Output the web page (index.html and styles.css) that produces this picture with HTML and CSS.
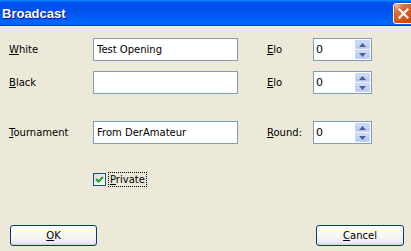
FILE: index.html
```html
<!DOCTYPE html>
<html lang="en">
<head>
    <meta charset="UTF-8">
    <title>Broadcast</title>
    <link rel="stylesheet" href="styles.css">
</head>
<body>
    <div class="window">
        <div class="titlebar">
            <span class="title">Broadcast</span>
            <button class="close" aria-label="Close">
                <svg width="11" height="11" viewBox="0 0 11 11">
                    <path d="M1.5 1.5 L9.5 9.5 M9.5 1.5 L1.5 9.5" stroke="#fff" stroke-width="2.2" stroke-linecap="square"/>
                </svg>
            </button>
        </div>

        <div class="content">
            <div class="row">
                <label class="label"><u>W</u>hite</label>
                <input class="field" type="text" value="Test Opening">
                <label class="label"><u>E</u>lo</label>
                <div class="spin">
                    <input class="spin-value" type="text" value="0">
                    <div class="arrows">
                        <span class="arrow"><svg width="7" height="4" viewBox="0 0 7 4"><path d="M0 4 L3.5 0 L7 4 Z" fill="#4d6185"/></svg></span>
                        <span class="arrow"><svg width="7" height="4" viewBox="0 0 7 4"><path d="M0 0 L3.5 4 L7 0 Z" fill="#4d6185"/></svg></span>
                    </div>
                </div>
            </div>

            <div class="row row-second">
                <label class="label"><u>B</u>lack</label>
                <input class="field" type="text" value="">
                <label class="label"><u>E</u>lo</label>
                <div class="spin">
                    <input class="spin-value" type="text" value="0">
                    <div class="arrows">
                        <span class="arrow"><svg width="7" height="4" viewBox="0 0 7 4"><path d="M0 4 L3.5 0 L7 4 Z" fill="#4d6185"/></svg></span>
                        <span class="arrow"><svg width="7" height="4" viewBox="0 0 7 4"><path d="M0 0 L3.5 4 L7 0 Z" fill="#4d6185"/></svg></span>
                    </div>
                </div>
            </div>

            <div class="row row-third">
                <label class="label"><u>T</u>ournament</label>
                <input class="field" type="text" value="From DerAmateur">
                <label class="label"><u>R</u>ound:</label>
                <div class="spin">
                    <input class="spin-value" type="text" value="0">
                    <div class="arrows">
                        <span class="arrow"><svg width="7" height="4" viewBox="0 0 7 4"><path d="M0 4 L3.5 0 L7 4 Z" fill="#4d6185"/></svg></span>
                        <span class="arrow"><svg width="7" height="4" viewBox="0 0 7 4"><path d="M0 0 L3.5 4 L7 0 Z" fill="#4d6185"/></svg></span>
                    </div>
                </div>
            </div>

            <div class="check-row">
                <span class="checkbox">
                    <svg width="9" height="9" viewBox="0 0 9 9">
                        <path d="M1 4 L3.5 6.5 L8 2" fill="none" stroke="#21a121" stroke-width="2"/>
                    </svg>
                </span>
                <span class="check-label"><u>P</u>rivate</span>
            </div>

            <div class="footer">
                <button class="button"><u>O</u>K</button>
                <button class="button"><u>C</u>ancel</button>
            </div>
        </div>
    </div>
</body>
</html>
```

FILE: styles.css
```css
body {
    margin: 0;
    width: 411px;
    height: 251px;
    overflow: hidden;
    background-color: #ece9d8;
    font-family: "DejaVu Sans", Verdana, sans-serif;
    font-size: 10px;
    color: #000;
}

.window {
    height: 251px;
}

.titlebar {
    height: 26px;
    display: flex;
    align-items: center;
    justify-content: space-between;
    overflow: hidden;
    background: linear-gradient(to bottom, #0997ff 0, #0053ee 8%, #0050ee 40%, #0066ff 88%, #0066ff 93%, #005bff 95%, #003dd7 96%, #003dd7 100%);
}

.title {
    padding-left: 2px;
    font-family: "Liberation Sans", Arial, sans-serif;
    font-size: 13px;
    font-weight: bold;
    color: #fff;
    text-shadow: 1px 1px 0 #0f1089;
}

.close {
    width: 21px;
    height: 21px;
    margin-right: -3px;
    padding: 0;
    display: flex;
    align-items: center;
    justify-content: center;
    border: 1px solid #fff;
    border-radius: 3px;
    background: radial-gradient(circle at 90% 90%, #cc4600 0%, #dc6527 55%, #cd7546 70%, #ffccb2 90%, #fff 100%);
    box-shadow: inset 0 -1px 2px 1px #da4600;
}

.content {
    padding: 12px 0 0 9px;
}

.row {
    display: grid;
    grid-template-columns: 84px 174px 46px 59px;
    align-items: center;
    height: 23px;
}

.row-second {
    margin-top: 10px;
}

.row-third {
    margin-top: 27px;
}

.label {
    white-space: nowrap;
}

.field {
    box-sizing: border-box;
    width: 145px;
    height: 23px;
    margin: 0;
    padding: 0 3px;
    border: 1px solid #7f9db9;
    background: #fff;
    font-family: inherit;
    font-size: 10px;
    color: #000;
    outline: none;
}

.spin {
    box-sizing: border-box;
    width: 59px;
    height: 23px;
    display: flex;
    border: 1px solid #7f9db9;
    background: #fff;
}

.spin-value {
    flex: 1;
    min-width: 0;
    margin: 0;
    padding: 0 2px;
    border: none;
    font-family: inherit;
    font-size: 11px;
    outline: none;
    background: transparent;
}

.arrows {
    width: 15px;
    margin: 1px 1px 1px 0;
    display: flex;
    flex-direction: column;
    gap: 1px;
    background: #f5f1e6;
}

.arrow {
    flex: 1;
    display: flex;
    align-items: center;
    justify-content: center;
    border-radius: 1px;
    background: linear-gradient(to bottom, #d0dcfb, #b7c8f5);
    border: 1px solid #c5d3f8;
}

.check-row {
    display: flex;
    align-items: center;
    gap: 2px;
    height: 15px;
    margin-top: 28px;
    padding-left: 84px;
}

.checkbox {
    box-sizing: border-box;
    width: 13px;
    height: 13px;
    display: flex;
    align-items: center;
    justify-content: center;
    border: 1px solid #1c5180;
    background: linear-gradient(135deg, #dcdcd7, #fff);
}

.check-label {
    padding: 0 1px;
    border: 1px dotted #000;
    line-height: 13px;
}

.footer {
    display: flex;
    justify-content: space-between;
    margin-top: 38px;
    padding: 0 7px 0 1px;
}

.button {
    box-sizing: border-box;
    width: 87px;
    height: 21px;
    padding: 0;
    border: 1px solid #003c74;
    border-radius: 3px;
    background: linear-gradient(to bottom, #fff, #f0f0ea 85%, #d6d0c5);
    font-family: inherit;
    font-size: 10px;
    color: #000;
}

.button:last-child {
    width: 88px;
}
```
